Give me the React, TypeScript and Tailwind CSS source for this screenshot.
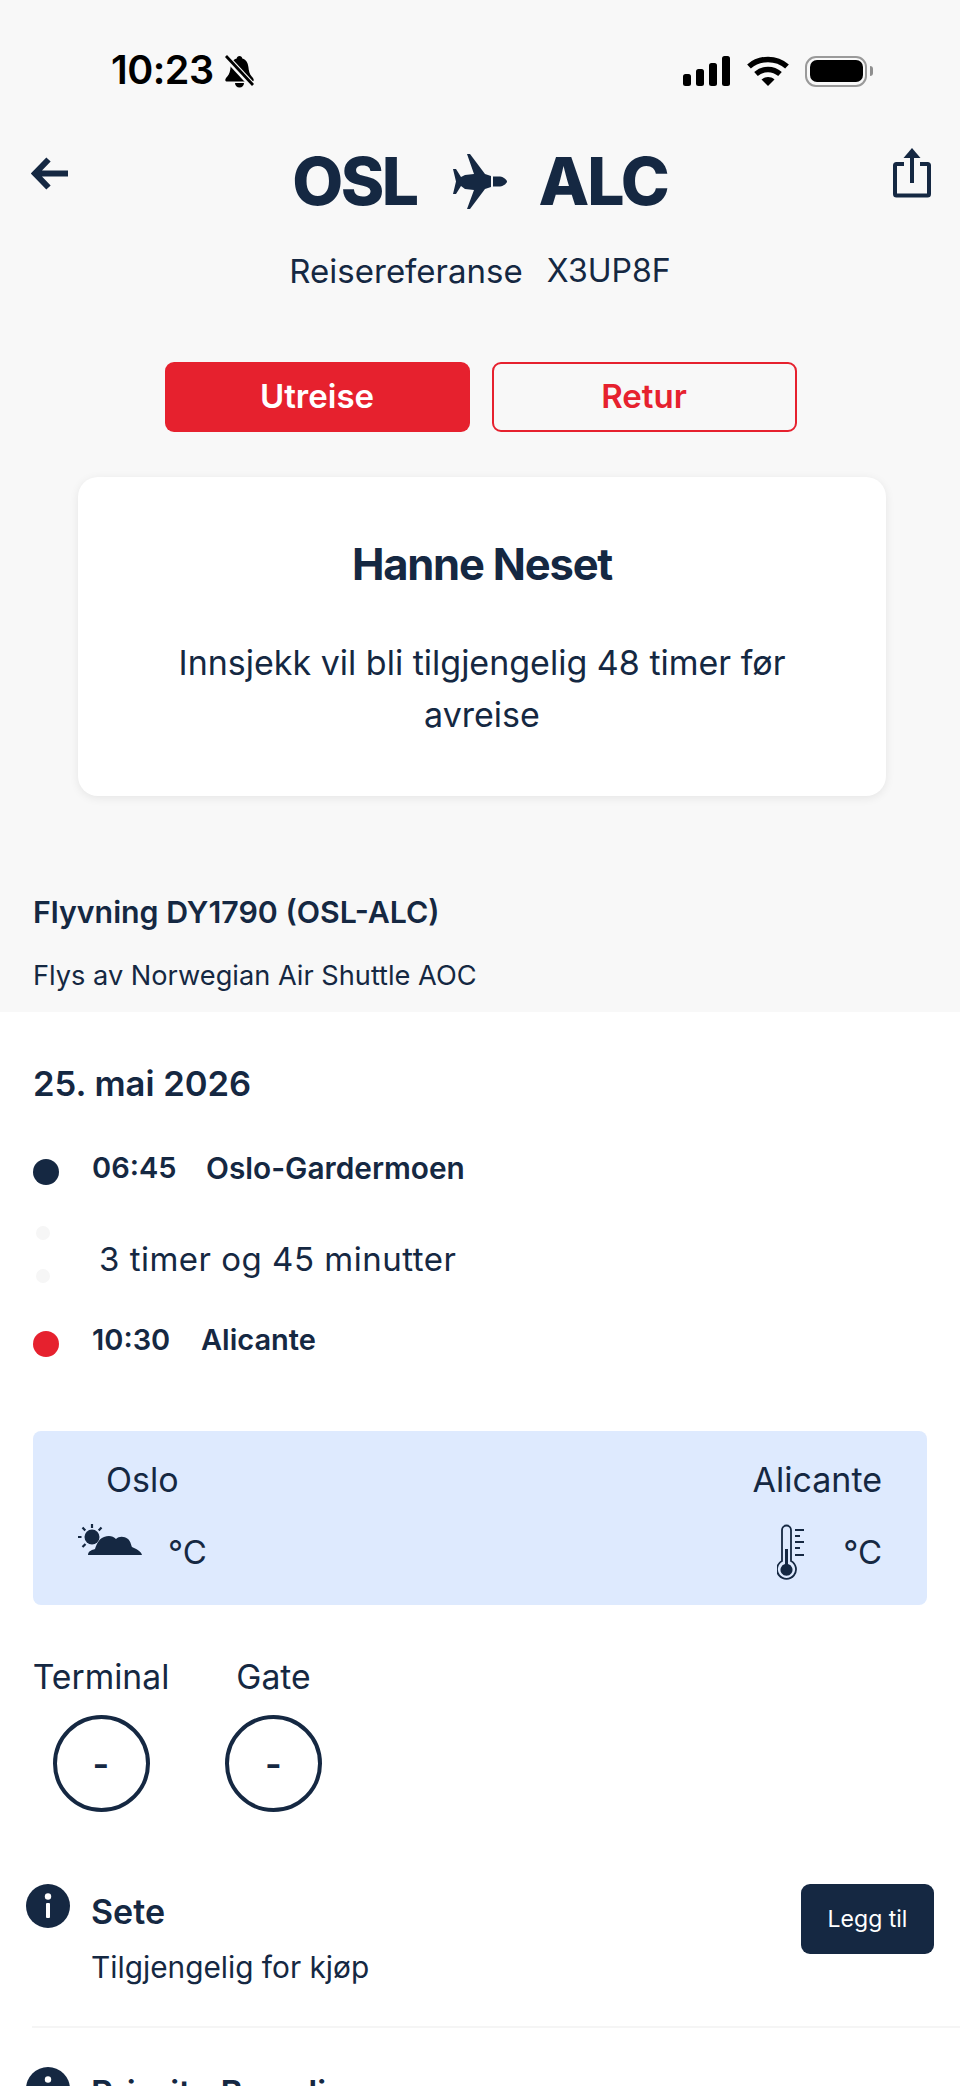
const navy = "#152842"

const BellSlash = () => (
  <svg width="31" height="33" viewBox="0 0 31 33" className="block">
    <path d="M15.5 1c-1.6 0-2.6 1-2.8 2.4C8.6 4.6 7 8 6.6 12c-.4 4-1 7-3.3 9.6-1 1.2-2 2.2-2 3.4 0 1 .8 1.6 2 1.6h24.4c1.2 0 2-.6 2-1.6 0-1.2-1-2.2-2-3.4-2.3-2.6-2.9-5.6-3.3-9.6-.4-4-2-7.4-6.1-8.6C18.1 2 17.1 1 15.5 1z" fill="#000" />
    <path d="M11 28h9c0 2.500-2 4.500-4.500 4.500S11 30.500 11 28z" fill="#000" />
    <path d="M2 2l27 29" stroke="#f8f8f8" strokeWidth="6.500" />
    <path d="M2 1l27 29" stroke="#000" strokeWidth="2.800" />
  </svg>
)

const Signal = () => (
  <svg width="48" height="30" viewBox="0 0 48 30" className="block">
    <rect x="0" y="18" width="8" height="12" rx="2.500" fill="#000" />
    <rect x="13" y="13" width="8" height="17" rx="2.500" fill="#000" />
    <rect x="26" y="7" width="8" height="23" rx="2.500" fill="#000" />
    <rect x="39" y="0" width="8" height="30" rx="2.500" fill="#000" />
  </svg>
)

const Wifi = () => (
  <svg width="42" height="30" viewBox="0 0 42 30" className="block">
    <path d="M2 10.500C12.500 1 29.500 1 40 10.500" fill="none" stroke="#000" strokeWidth="5.500" />
    <path d="M9 18c7-6 17-6 24 0" fill="none" stroke="#000" strokeWidth="5.500" />
    <path d="M14.500 23.500c4-3.200 9-3.200 13 0L21 30z" fill="#000" />
  </svg>
)

const Battery = () => (
  <div className="flex items-center gap-[3px]">
    <div className="w-[62px] h-[31px] rounded-[11px] border-[2.500px] border-[#9a9a9a] p-[2.500px]">
      <div className="w-full h-full rounded-[7px] bg-black"></div>
    </div>
    <div className="w-[3px] h-[10px] rounded-r-full bg-[#8f8f8f]"></div>
  </div>
)

const BackArrow = () => (
  <svg width="37" height="33" viewBox="0 0 37 33" className="block">
    <path d="M17.500 2.500L4 16.500 17.500 30.500M4.500 16.500h32.500" fill="none" stroke={navy} strokeWidth="6" />
  </svg>
)

const Share = () => (
  <svg width="38" height="50" viewBox="0 0 38 50" className="block">
    <path d="M11 16H3.500a1.500 1.500 0 0 0-1.500 1.500V46a1.500 1.500 0 0 0 1.500 1.500h31A1.500 1.500 0 0 0 36 46V17.500a1.500 1.500 0 0 0-1.500-1.500H27" fill="none" stroke={navy} strokeWidth="4" />
    <path d="M19 35V4" stroke={navy} strokeWidth="4" />
    <path d="M19 0l8.500 10h-17z" fill={navy} />
  </svg>
)

const Plane = () => (
  <svg width="54" height="55" viewBox="0 0 54 55" className="block">
    <path d="M14 0h3l15 20 6 2v11l-6 2-15 20h-3l7-19-9-1-4-3-5 8H0l3-12.500L0 15h3l5 8 4-2 9-1z" fill={navy} />
    <path d="M40 22.500h7c4 .5 7 3.500 7 5s-3 4.500-7 5h-7z" fill={navy} />
  </svg>
)

const SunCloud = () => (
  <svg width="66" height="32" viewBox="0 0 66 32" className="block">
    <circle cx="14" cy="13" r="7.500" fill={navy} />
    <path d="M14 0v4M4.500 3.500l2.800 3M23.500 3.500l-2.800 3M0 13h3.500M4.500 23l3-3" stroke={navy} strokeWidth="2.200" />
    <path d="M10 31c0-4 4-5 7-6 1-3 3-10 9-12 5-2 9-1 12 2 3-3 8-3 12 0 3 3 3 6 4 8 4 2 9 4 10 8z" fill={navy} />
  </svg>
)

const Thermometer = () => (
  <svg width="30" height="56" viewBox="0 0 30 56" className="block">
    <path d="M5 37V6a4.500 4.500 0 0 1 9 0v31a9.500 9.500 0 1 1-9 0z" fill="none" stroke={navy} strokeWidth="1.800" />
    <path d="M8 25h3v15a6 6 0 1 1-3 0z" fill={navy} />
    <path d="M18 6h9M18 12h5M18 18h9M18 24h5M18 31h9" stroke={navy} strokeWidth="2" />
  </svg>
)

const InfoIcon = () => (
  <svg width="44" height="44" viewBox="0 0 44 44" className="block shrink-0">
    <circle cx="22" cy="22" r="22" fill={navy} />
    <circle cx="22" cy="12.500" r="3.200" fill="#fff" />
    <rect x="20" y="19" width="4" height="15" rx="1" fill="#fff" />
  </svg>
)

const TopSection = () => (
  <div className="bg-[#f8f8f8] h-[1012px]">
    <div className="h-[142px] flex items-center justify-between pl-[111px] pr-[87px]">
      <div className="flex items-center gap-[10px]">
        <span className="text-[39.500px] leading-none font-semibold text-black tracking-[-0.5px]">10:23</span>
        <BellSlash />
      </div>
      <div className="flex items-center gap-[16px]">
        <Signal />
        <Wifi />
        <Battery />
      </div>
    </div>

    <div className="grid grid-cols-[1fr_auto_1fr] items-start h-[78px] px-[31px]">
      <div className="pt-[15px]"><BackArrow /></div>
      <div className="flex items-center pt-[10px]">
        <span className="text-[66px] leading-[58px] font-extrabold tracking-[-2.500px] mr-[36px]">OSL</span>
        <Plane />
        <span className="text-[66px] leading-[58px] font-extrabold tracking-[-2px] ml-[32px]">ALC</span>
      </div>
      <div className="flex justify-end pt-[6px] -mr-[2px]"><Share /></div>
    </div>

    <div className="flex justify-center items-center gap-[24px] mt-[31px] leading-[40px]">
      <span className="text-[33px]">Reisereferanse</span>
      <span className="text-[32px]">X3UP8F</span>
    </div>

    <div className="flex justify-center gap-[22px] mt-[71px] pl-[1px]">
      <button className="w-[305px] h-[70px] rounded-[9px] bg-[#e6212e] text-white text-[33px] font-semibold">Utreise</button>
      <button className="w-[305px] h-[70px] rounded-[9px] border-[2.500px] border-[#e6212e] text-[#e6212e] text-[33px] font-semibold">Retur</button>
    </div>

    <div className="ml-[78px] w-[808px] mt-[45px] h-[319px] rounded-[20px] bg-white shadow-[0_2px_10px_rgba(0,0,0,0.08)] flex flex-col items-center pt-[62px]">
      <h1 className="text-[43.500px] leading-[50px] font-bold tracking-[-1.200px]">Hanne Neset</h1>
      <p className="mt-[48px] w-[660px] text-center text-[34px] leading-[52px]">Innsjekk vil bli tilgjengelig 48 timer før avreise</p>
    </div>

    <div className="px-[33px] mt-[96px]">
      <h2 className="text-[30.300px] leading-[40px] font-semibold">Flyvning DY1790 (OSL-ALC)</h2>
      <p className="mt-[24px] text-[27.200px] leading-[40px]">Flys av Norwegian Air Shuttle AOC</p>
    </div>
  </div>
)

const Itinerary = () => (
  <div className="px-[33px]">
    <h2 className="mt-[51px] text-[34.600px] leading-[40px] font-semibold">25. mai 2026</h2>
    <div className="flex items-center mt-[45px] h-[40px]">
      <span className="w-[26px] h-[26px] rounded-full bg-[#152842] mt-[8px]"></span>
      <span className="ml-[33px] text-[29px] font-semibold w-[114px]">06:45</span>
      <span className="text-[29.800px] font-semibold">Oslo-Gardermoen</span>
    </div>
    <div className="relative h-[144px] flex items-center pl-[66px]">
      <span className="absolute left-[3px] top-[38px] w-[14px] h-[14px] rounded-full bg-[#f6f6f6]"></span>
      <span className="absolute left-[3px] top-[81px] w-[14px] h-[14px] rounded-full bg-[#f6f6f6]"></span>
      <span className="text-[33px] tracking-[0.5px]">3 timer og 45 minutter</span>
    </div>
    <div className="flex items-center h-[40px] -mt-[12px]">
      <span className="w-[26px] h-[26px] rounded-full bg-[#e6212e] mt-[8px]"></span>
      <span className="ml-[33px] text-[29px] font-semibold w-[109px]">10:30</span>
      <span className="text-[29px] font-semibold">Alicante</span>
    </div>
  </div>
)

const Weather = () => (
  <div className="mx-[33px] mt-[71px] h-[174px] rounded-[8px] bg-[#deeafe] flex justify-between pl-[45px] pr-[45px] pt-[29px]">
    <div>
      <div className="text-[34px] leading-[40px] pl-[28px]">Oslo</div>
      <div className="flex items-start mt-[24px]">
        <SunCloud />
        <span className="text-[33px] leading-[40px] ml-[24px] mt-[8px]">°C</span>
      </div>
    </div>
    <div className="flex flex-col items-end">
      <div className="text-[34px] leading-[40px]">Alicante</div>
      <div className="flex items-start mt-[24px]">
        <Thermometer />
        <span className="text-[33px] leading-[40px] ml-[36px] mt-[8px]">°C</span>
      </div>
    </div>
  </div>
)

const Gates = () => (
  <div className="flex mt-[52px] pl-[33px]">
    <div className="w-[136px] flex flex-col items-center">
      <span className="text-[33.700px] leading-[40px]">Terminal</span>
      <div className="mt-[18px] w-[97px] h-[97px] rounded-full border-[4px] border-[#152842] flex items-center justify-center text-[36px] font-semibold">-</div>
    </div>
    <div className="w-[97px] ml-[56px] flex flex-col items-center">
      <span className="text-[33.700px] leading-[40px]">Gate</span>
      <div className="mt-[18px] w-[97px] h-[97px] rounded-full border-[4px] border-[#152842] flex items-center justify-center text-[36px] font-semibold">-</div>
    </div>
  </div>
)

const Extras = () => (
  <div className="mt-[72px]">
    <div className="flex pl-[26px] pr-[26px] h-[142px]">
      <InfoIcon />
      <div className="ml-[21px] flex-1">
        <div className="text-[34px] leading-[40px] font-semibold mt-[8px]">Sete</div>
        <div className="text-[29.800px] leading-[40px] mt-[15px]">Tilgjengelig for kjøp</div>
      </div>
      <button className="w-[133px] h-[70px] rounded-[9px] bg-[#152842] text-white text-[23px]">Legg til</button>
    </div>
    <div className="ml-[32px] h-[2px] bg-[#f5f5f5]"></div>
    <div className="flex pl-[26px] mt-[39px]">
      <InfoIcon />
      <div className="ml-[21px] text-[34px] leading-[40px] font-semibold mt-[6px]">Priority Boarding</div>
    </div>
  </div>
)

export default function App() {
  return (
    <div className="h-[2086px] w-[960px] overflow-hidden bg-white text-[#152842] font-['Inter',sans-serif]">
      <TopSection />
      <Itinerary />
      <Weather />
      <Gates />
      <Extras />
    </div>
  )
}
